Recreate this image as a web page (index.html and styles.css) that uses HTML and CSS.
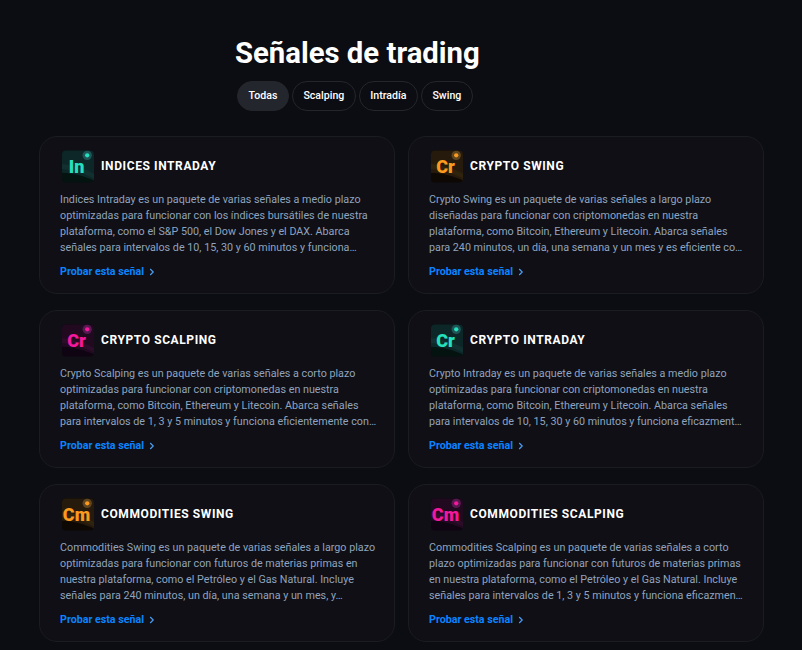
FILE: index.html
```html
<!DOCTYPE html>
<html>
<head>
  <meta charset="utf-8">
  <meta name="viewport" content="width=device-width, initial-scale=1">
  <title>Señales de trading</title>
  <link rel="stylesheet" href="styles.css">
</head>
<body>
  <svg class="defs" width="0" height="0">
    <symbol id="logo-bg" viewBox="0 0 33 33">
      <rect width="33" height="33" rx="4" class="logo-base"/>
      <path d="M4 0H29a4 4 0 0 1 4 4V31C24 27 12 23 0 23V4a4 4 0 0 1 4-4Z" class="logo-top"/>
      <path d="M0 19C12 20 24 24 33 29V24C24 19 12 15 0 14Z" class="logo-band"/>
      <circle cx="26" cy="5" r="4.8" class="logo-ring"/>
      <circle cx="26" cy="5" r="2.2" class="logo-dot"/>
    </symbol>
  </svg>

  <header class="top">
    <h1>Señales de trading</h1>
    <nav class="tabs">
      <a class="tab active">Todas</a>
      <a class="tab">Scalping</a>
      <a class="tab">Intradía</a>
      <a class="tab">Swing</a>
    </nav>
  </header>

  <main class="cards">
    <article class="card">
      <div class="card-head">
        <div class="logo teal"><svg><use href="#logo-bg"/></svg><span>In</span></div>
        <h3>INDICES INTRADAY</h3>
      </div>
      <p>Indices Intraday es un paquete de varias señales a medio plazo optimizadas para funcionar con los índices bursátiles de nuestra plataforma, como el S&amp;P 500, el Dow Jones y el DAX. Abarca señales para intervalos de 10, 15, 30 y 60 minutos y funciona…</p>
      <a class="try">Probar esta señal <svg viewBox="0 0 6 8" width="6" height="8"><path d="M1.2 1 4.2 4 1.2 7" fill="none" stroke="currentColor" stroke-width="1.2"/></svg></a>
    </article>

    <article class="card">
      <div class="card-head">
        <div class="logo orange"><svg><use href="#logo-bg"/></svg><span>Cr</span></div>
        <h3>CRYPTO SWING</h3>
      </div>
      <p>Crypto Swing es un paquete de varias señales a largo plazo diseñadas para funcionar con criptomonedas en nuestra plataforma, como Bitcoin, Ethereum y Litecoin. Abarca señales para 240 minutos, un día, una semana y un mes y es eficiente co…</p>
      <a class="try">Probar esta señal <svg viewBox="0 0 6 8" width="6" height="8"><path d="M1.2 1 4.2 4 1.2 7" fill="none" stroke="currentColor" stroke-width="1.2"/></svg></a>
    </article>

    <article class="card">
      <div class="card-head">
        <div class="logo pink"><svg><use href="#logo-bg"/></svg><span>Cr</span></div>
        <h3>CRYPTO SCALPING</h3>
      </div>
      <p>Crypto Scalping es un paquete de varias señales a corto plazo optimizadas para funcionar con criptomonedas en nuestra plataforma, como Bitcoin, Ethereum y Litecoin. Abarca señales para intervalos de 1, 3 y 5 minutos y funciona eficientemente con…</p>
      <a class="try">Probar esta señal <svg viewBox="0 0 6 8" width="6" height="8"><path d="M1.2 1 4.2 4 1.2 7" fill="none" stroke="currentColor" stroke-width="1.2"/></svg></a>
    </article>

    <article class="card">
      <div class="card-head">
        <div class="logo teal"><svg><use href="#logo-bg"/></svg><span>Cr</span></div>
        <h3>CRYPTO INTRADAY</h3>
      </div>
      <p>Crypto Intraday es un paquete de varias señales a medio plazo optimizadas para funcionar con criptomonedas en nuestra plataforma, como Bitcoin, Ethereum y Litecoin. Abarca señales para intervalos de 10, 15, 30 y 60 minutos y funciona eficazment…</p>
      <a class="try">Probar esta señal <svg viewBox="0 0 6 8" width="6" height="8"><path d="M1.2 1 4.2 4 1.2 7" fill="none" stroke="currentColor" stroke-width="1.2"/></svg></a>
    </article>

    <article class="card">
      <div class="card-head">
        <div class="logo orange"><svg><use href="#logo-bg"/></svg><span>Cm</span></div>
        <h3>COMMODITIES SWING</h3>
      </div>
      <p>Commodities Swing es un paquete de varias señales a largo plazo optimizadas para funcionar con futuros de materias primas en nuestra plataforma, como el Petróleo y el Gas Natural. Incluye señales para 240 minutos, un día, una semana y un mes, y…</p>
      <a class="try">Probar esta señal <svg viewBox="0 0 6 8" width="6" height="8"><path d="M1.2 1 4.2 4 1.2 7" fill="none" stroke="currentColor" stroke-width="1.2"/></svg></a>
    </article>

    <article class="card">
      <div class="card-head">
        <div class="logo pink"><svg><use href="#logo-bg"/></svg><span>Cm</span></div>
        <h3>COMMODITIES SCALPING</h3>
      </div>
      <p>Commodities Scalping es un paquete de varias señales a corto plazo optimizadas para funcionar con futuros de materias primas en nuestra plataforma, como el Petróleo y el Gas Natural. Incluye señales para intervalos de 1, 3 y 5 minutos y funciona eficazmen…</p>
      <a class="try">Probar esta señal <svg viewBox="0 0 6 8" width="6" height="8"><path d="M1.2 1 4.2 4 1.2 7" fill="none" stroke="currentColor" stroke-width="1.2"/></svg></a>
    </article>
  </main>
</body>
</html>
```

FILE: styles.css
```css
* {
  box-sizing: border-box;
}
html, body {
  height: 650px;
  overflow: hidden;
}
body {
  margin: 0;
  background: #0c0d12;
  color: #fff;
  font-family: Roboto, "Liberation Sans", sans-serif;
}
.defs {
  display: block;
}
.top {
  padding: 36px 0 0 235px;
}
h1 {
  margin: 0;
  font-size: 29.3px;
  line-height: 34px;
  font-weight: 700;
}
.tabs {
  display: flex;
  gap: 3px;
  margin: 11px 0 0 2px;
}
.tab {
  height: 30px;
  line-height: 27px;
  padding: 0 10.5px;
  border: 1px solid #24262c;
  border-radius: 15px;
  font-size: 10.6px;
  font-weight: 500;
}
.tab.active {
  background: #24262e;
}
.cards {
  display: grid;
  grid-template-columns: 356px 356px;
  grid-auto-rows: 158px;
  column-gap: 13px;
  row-gap: 16px;
  margin: 25px 0 0 39px;
}
.card {
  padding: 13px 20px 0;
  background: #0f0f15;
  border: 1px solid #1b1c22;
  border-radius: 18px;
}
.card-head {
  display: flex;
  align-items: center;
  gap: 7px;
  margin-left: 2px;
}
h3 {
  margin: 0 0 1px;
  font-size: 12px;
  font-weight: 700;
  letter-spacing: .6px;
}
.card p {
  height: 64px;
  margin: 9px -3px 0 0;
  font-size: 10.75px;
  line-height: 16px;
  color: #90a3be;
}
.try {
  display: flex;
  align-items: center;
  gap: 5px;
  margin-top: 8px;
  font-size: 10.7px;
  line-height: 16px;
  font-weight: 700;
  color: #0a84ff;
}
.try svg {
  color: #4a9df5;
}
.logo {
  position: relative;
  flex: none;
  display: flex;
  justify-content: center;
  width: 32px;
  height: 33px;
  padding: 6px 3px 0 0;
  font-size: 18px;
  line-height: 22px;
  font-weight: 900;
}
.logo svg {
  position: absolute;
  inset: 0;
  width: 32px;
  height: 33px;
}
.logo span {
  position: relative;
}
.logo.teal {
  color: #25e0bd;
  --top: #0d2729;
  --base: #04130f;
  --band: #11302f;
  --ring: #205557;
}
.logo.orange {
  color: #fb9a1e;
  --top: #251a0c;
  --base: #0d0803;
  --band: #30230e;
  --ring: #5f4520;
}
.logo.pink {
  color: #f5189c;
  --top: #210a20;
  --base: #0f0412;
  --band: #2b0c29;
  --ring: #571a50;
}
.logo-base {
  fill: var(--base);
}
.logo-top {
  fill: var(--top);
}
.logo-band {
  fill: var(--band);
}
.logo-ring {
  fill: var(--ring);
}
.logo-dot {
  fill: currentColor;
}
```
